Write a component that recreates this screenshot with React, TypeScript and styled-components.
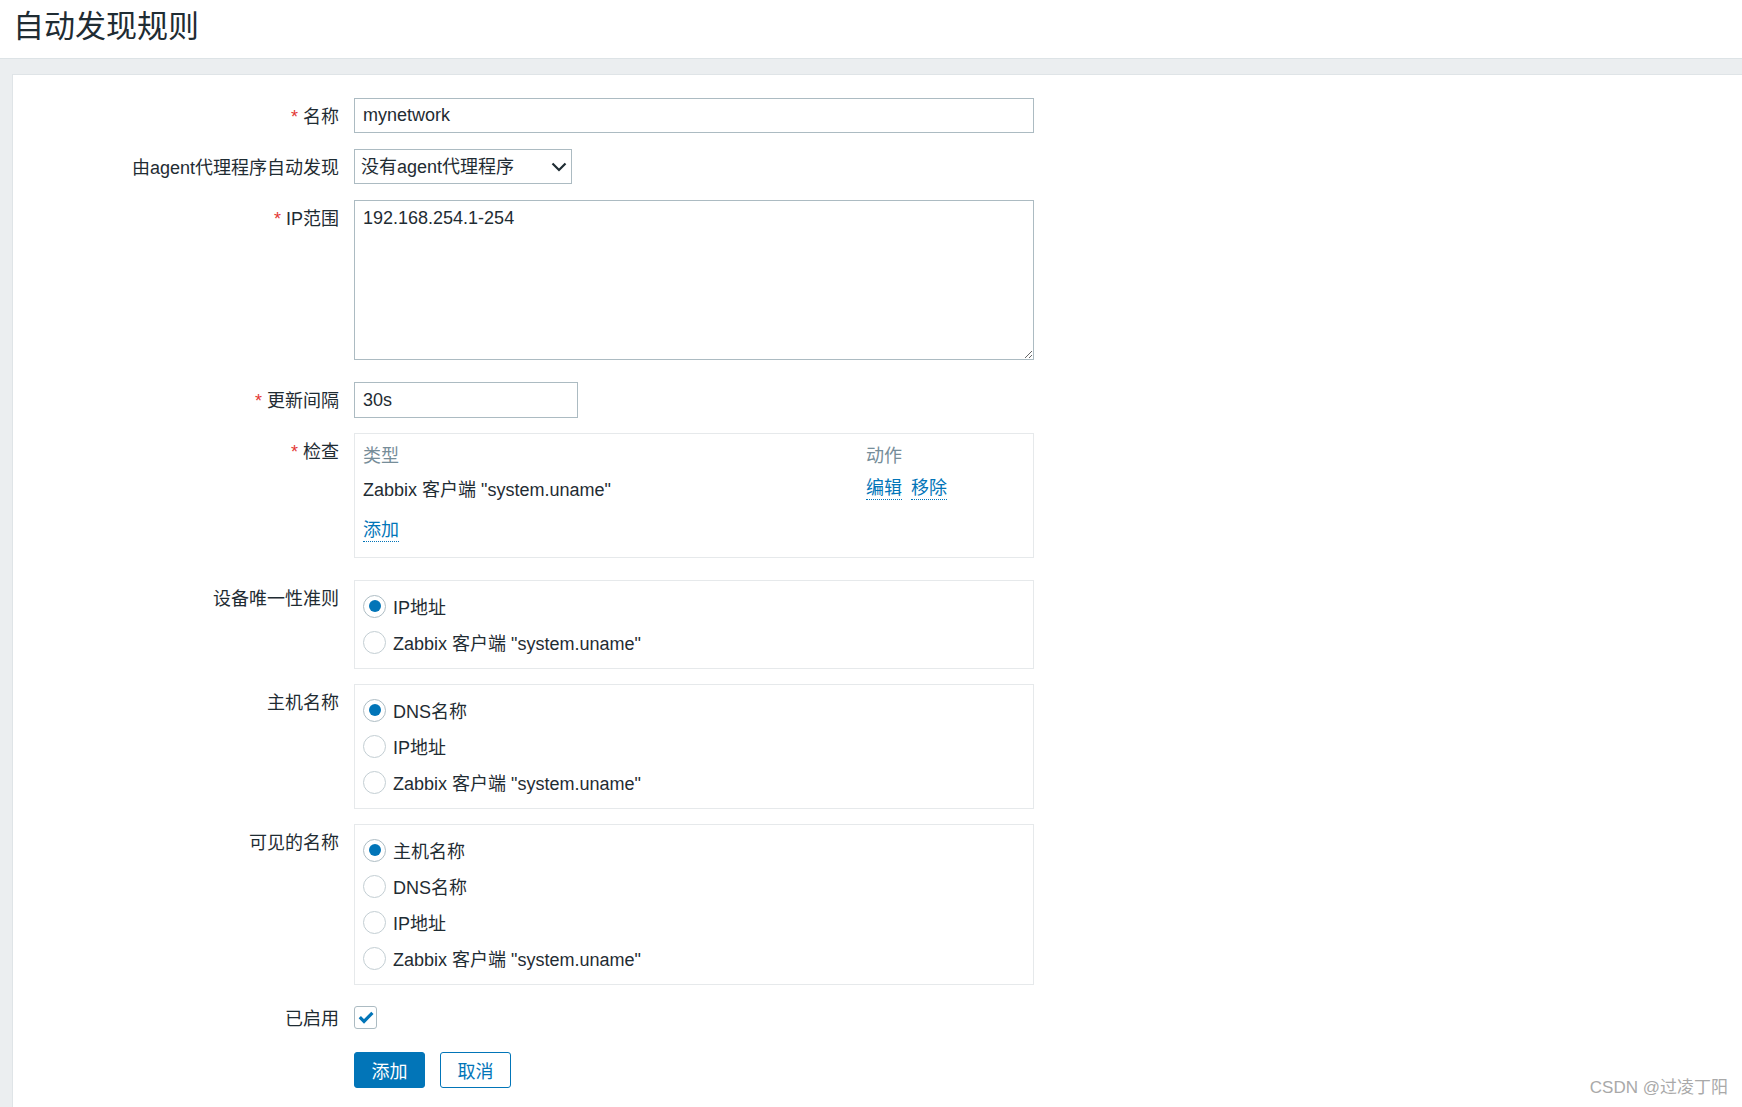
import React from "react";
import styled, { createGlobalStyle } from "styled-components";

const GlobalStyle = createGlobalStyle`
  html, body {
    margin: 0;
    padding: 0;
    background: #ebeef0;
  }
  body {
    font-family: "Liberation Sans", Arial, "Noto Sans CJK SC", sans-serif;
    font-size: 18px;
    color: #1f2c33;
  }
`;

const Page = styled.div`
  position: relative;
  min-height: 100vh;
  display: flex;
  flex-direction: column;
`;

const Header = styled.header`
  height: 58px;
  background: #ffffff;
  border-bottom: 1px solid #dde3e6;
  padding-left: 13px;
`;

const Title = styled.h1`
  margin: 0;
  font-weight: normal;
  font-size: 31px;
  line-height: 53px;
  color: #1f2c33;
`;

const Body = styled.div`
  flex: 1;
  display: flex;
  padding: 15px 0 0 12px;
`;

const Card = styled.main`
  flex: 1;
  background: #ffffff;
  border-top: 1px solid #dfe4e7;
  border-left: 1px solid #dfe4e7;
  padding-top: 23px;
`;

const Row = styled.div<{ $mb?: number }>`
  display: flex;
  align-items: flex-start;
  gap: 15px;
  margin-bottom: ${(p) => p.$mb ?? 15}px;
`;

// label text sits a touch lower than the field centre, as in Zabbix
const Label = styled.label<{ $lh?: number }>`
  width: 326px;
  flex: none;
  text-align: right;
  padding-top: 4px;
  line-height: ${(p) => p.$lh ?? 31}px;
  white-space: nowrap;
`;

const Asterisk = styled.span`
  color: #e33734;
  margin-right: 5px;
`;

const TextInput = styled.input<{ $w: number; $h?: number }>`
  box-sizing: border-box;
  width: ${(p) => p.$w}px;
  height: ${(p) => p.$h ?? 35}px;
  border: 1px solid #acbbc2;
  padding: 0 8px;
  font: inherit;
  color: #1f2c33;
  background: #fff;
  outline: none;
`;

const TextArea = styled.textarea`
  box-sizing: border-box;
  width: 680px;
  height: 160px;
  border: 1px solid #acbbc2;
  padding: 6px 8px;
  font: inherit;
  line-height: 22px;
  color: #1f2c33;
  outline: none;
  resize: both;
  margin: 0;
  display: block;
`;

const SelectWrap = styled.div`
  position: relative;
  width: 218px;
  height: 35px;
`;

const Select = styled.select`
  box-sizing: border-box;
  width: 100%;
  height: 100%;
  appearance: none;
  -webkit-appearance: none;
  border: 1px solid #acbbc2;
  border-radius: 0;
  background: #fff;
  padding: 0 6px;
  font: inherit;
  color: #1f2c33;
  outline: none;
`;

const Chevron = styled.svg`
  position: absolute;
  right: 5px;
  top: 13px;
  pointer-events: none;
`;

const Box = styled.div<{ $pad?: string }>`
  box-sizing: border-box;
  width: 680px;
  border: 1px solid #e6e9eb;
  padding: ${(p) => p.$pad ?? "7px 8px 8px"};
`;

const CheckTable = styled.div`
  display: grid;
  grid-template-columns: 503px 1fr;
  grid-auto-rows: 34px;
  align-items: center;
`;

const HeadCell = styled.div`
  color: #768d99;
`;

const Actions = styled.div`
  display: flex;
  gap: 9px;
`;

const LinkText = styled.a`
  display: inline-block;
  line-height: 22px;
  color: #0275b8;
  text-decoration: none;
  border-bottom: 1px dotted #0275b8;
  cursor: pointer;
`;

const AddRow = styled.div`
  margin-top: 8px;
  height: 34px;
  display: flex;
  align-items: center;
`;

const RadioRow = styled.label`
  display: flex;
  align-items: center;
  gap: 7px;
  height: 36px;
  cursor: pointer;
`;

const RadioCircle = styled.span<{ $on?: boolean }>`
  box-sizing: border-box;
  width: 23px;
  height: 23px;
  flex: none;
  border-radius: 50%;
  border: 1px solid ${(p) => (p.$on ? "#aebdc4" : "#c3ced3")};
  background: #fff;
  display: flex;
  align-items: center;
  justify-content: center;
  &::after {
    content: "";
    width: 12px;
    height: 12px;
    border-radius: 50%;
    background: ${(p) => (p.$on ? "#0275b8" : "transparent")};
  }
`;

const CheckBox = styled.span`
  box-sizing: border-box;
  width: 23px;
  height: 23px;
  border: 1px solid #acbbc2;
  border-radius: 3px;
  display: flex;
  align-items: center;
  justify-content: center;
  background: #fff;
`;

const Buttons = styled.div`
  display: flex;
  gap: 15px;
`;

const Button = styled.button<{ $primary?: boolean }>`
  box-sizing: border-box;
  width: 71px;
  height: 36px;
  border-radius: 3px;
  border: 1px solid #0275b8;
  background: ${(p) => (p.$primary ? "#0275b8" : "#ffffff")};
  color: ${(p) => (p.$primary ? "#ffffff" : "#0275b8")};
  font: inherit;
  cursor: pointer;
  padding: 0;
`;

const Watermark = styled.div`
  position: absolute;
  right: 14px;
  bottom: 9px;
  font-size: 17px;
  color: #a9a9a9;
  text-shadow: 0 0 1px rgba(255, 255, 255, 0.8);
`;

type RadioGroupProps = { options: string[]; selected: number };

const RadioGroup = ({ options, selected }: RadioGroupProps) => (
  <Box>
    {options.map((o, i) => (
      <RadioRow key={o}>
        <RadioCircle $on={i === selected} />
        <span>{o}</span>
      </RadioRow>
    ))}
  </Box>
);

const uname = 'Zabbix 客户端 "system.uname"';

export default function App() {
  return (
    <Page>
      <GlobalStyle />
      <Header>
        <Title>自动发现规则</Title>
      </Header>
      <Body>
        <Card>
          <Row $mb={16}>
            <Label><Asterisk>*</Asterisk>名称</Label>
            <TextInput $w={680} defaultValue="mynetwork" />
          </Row>
          <Row $mb={16}>
            <Label>由agent代理程序自动发现</Label>
            <SelectWrap>
              <Select defaultValue="none">
                <option value="none">没有agent代理程序</option>
              </Select>
              <Chevron width="16" height="10" viewBox="0 0 16 10">
                <path d="M1.5 1.5 L8 8 L14.5 1.5" fill="none" stroke="#1f2c33" strokeWidth="2.2" />
              </Chevron>
            </SelectWrap>
          </Row>
          <Row $mb={22}>
            <Label><Asterisk>*</Asterisk>IP范围</Label>
            <TextArea defaultValue="192.168.254.1-254" />
          </Row>
          <Row $mb={15}>
            <Label><Asterisk>*</Asterisk>更新间隔</Label>
            <TextInput $w={224} $h={36} defaultValue="30s" />
          </Row>
          <Row $mb={22}>
            <Label><Asterisk>*</Asterisk>检查</Label>
            <Box $pad="3px 8px 10px">
              <CheckTable>
                <HeadCell>类型</HeadCell>
                <HeadCell>动作</HeadCell>
                <div>{uname}</div>
                <Actions>
                  <LinkText>编辑</LinkText>
                  <LinkText>移除</LinkText>
                </Actions>
              </CheckTable>
              <AddRow>
                <LinkText>添加</LinkText>
              </AddRow>
            </Box>
          </Row>
          <Row $mb={15}>
            <Label>设备唯一性准则</Label>
            <RadioGroup options={["IP地址", uname]} selected={0} />
          </Row>
          <Row $mb={15}>
            <Label>主机名称</Label>
            <RadioGroup options={["DNS名称", "IP地址", uname]} selected={0} />
          </Row>
          <Row $mb={21}>
            <Label>可见的名称</Label>
            <RadioGroup options={["主机名称", "DNS名称", "IP地址", uname]} selected={0} />
          </Row>
          <Row $mb={23}>
            <Label $lh={19}>已启用</Label>
            <CheckBox>
              <svg width="16" height="13" viewBox="0 0 16 13">
                <path d="M1.8 6.2 L6 10.4 L14.4 1.8" fill="none" stroke="#0275b8" strokeWidth="3.2" />
              </svg>
            </CheckBox>
          </Row>
          <Row $mb={0}>
            <Label />
            <Buttons>
              <Button $primary>添加</Button>
              <Button>取消</Button>
            </Buttons>
          </Row>
        </Card>
      </Body>
      <Watermark>CSDN @过凌丁阳</Watermark>
    </Page>
  );
}
